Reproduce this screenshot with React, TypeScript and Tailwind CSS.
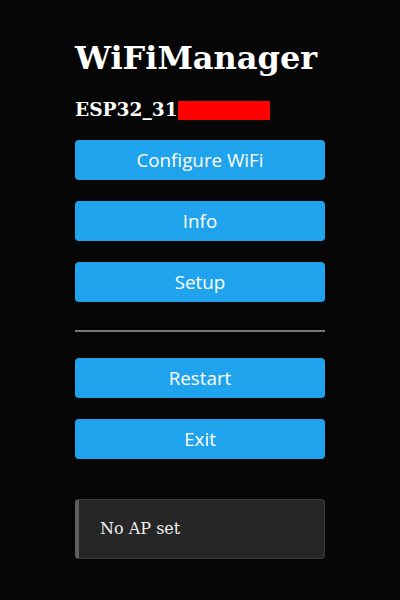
export default function App() {
  const btn =
    "h-10 w-full rounded-[4px] bg-[#1fa3ec] text-white text-[18.8px] flex items-center justify-center";
  const sans = { fontFamily: "'Open Sans', 'Noto Sans', sans-serif" };
  return (
    <div className="w-[400px] h-[600px] bg-[#060606] flex justify-center">
      <div className="w-[250px] flex flex-col">
        <h1
          className="text-white font-bold text-[32px] leading-none mt-[42px] text-left"
          style={{ fontFamily: "'DejaVu Serif', serif" }}
        >
          WiFiManager
        </h1>
        <div
          className="mt-[27px] flex items-center text-white font-bold text-[18.6px] leading-none h-[19px]"
          style={{ fontFamily: "'DejaVu Serif', serif" }}
        >
          <span>ESP32_31</span>
          <span className="inline-block w-[92px] h-[19px] bg-[#ff0000]" />
        </div>
        <div className="mt-[20px] flex flex-col gap-[21px]" style={sans}>
          <div className={btn}>Configure WiFi</div>
          <div className={btn}>Info</div>
          <div className={btn}>Setup</div>
        </div>
        <div className="mt-[28px] h-[2px] bg-[#777777]" />
        <div className="mt-[26px] flex flex-col gap-[21px]" style={sans}>
          <div className={btn}>Restart</div>
          <div className={btn}>Exit</div>
        </div>
        <div
          className="mt-[40px] h-[60px] rounded-[4px] bg-[#262626] border border-[#3a3a3a] border-l-[4px] border-l-[#5e5e5e] flex items-center pl-[21px] text-[#f0f0f0] text-[16px]"
          style={{ fontFamily: "'DejaVu Serif', serif" }}
        >
          No AP set
        </div>
      </div>
    </div>
  );
}
